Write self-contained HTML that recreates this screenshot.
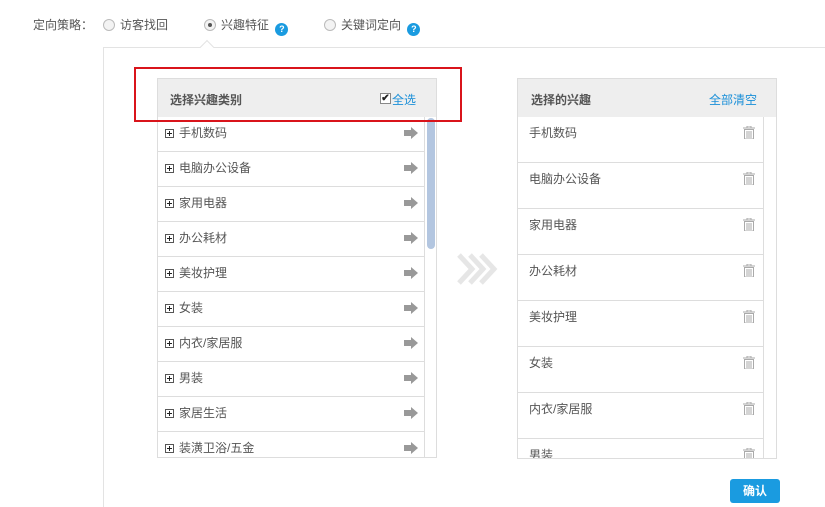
<!DOCTYPE html>
<html style="width:825px;height:507px;overflow:hidden"><head><meta charset="utf-8"><style>
*{margin:0;padding:0;box-sizing:border-box}
html,body{width:825px;height:507px;overflow:hidden}
body{background:#fff;font-family:"Liberation Sans","Noto Sans CJK SC",sans-serif;font-size:12px;color:#555;position:relative}
.abs{position:absolute}
.radio{display:inline-block;width:12px;height:12px;border:1px solid #bbb;border-radius:50%;background:#f3f3f3;vertical-align:-2px;margin-right:5px;position:relative}
.radio.on::after{content:"";position:absolute;left:3px;top:3px;width:4px;height:4px;border-radius:50%;background:#555}
.q{display:inline-block;width:13px;height:13px;border-radius:50%;background:#1a9be0;color:#fff;font-size:9px;text-align:center;line-height:13px;font-weight:bold;vertical-align:-3px;margin-left:3px}
.row{position:absolute;left:0;width:266px;height:35px;border-bottom:1px solid #ddd;line-height:32px;padding-left:7px;color:#555}
.plus{position:absolute;left:7px;top:12px;width:9px;height:9px;border:1px solid #555}
.plus::before{content:"";position:absolute;left:1px;top:3px;width:5px;height:1px;background:#222}
.plus::after{content:"";position:absolute;left:3px;top:1px;width:1px;height:5px;background:#222}
.row span.t{position:absolute;left:21px}
.arr{position:absolute;right:6px;top:10px}
.rrow{position:absolute;left:0;width:245px;height:46px;border-bottom:1px solid #ddd;padding:7px 0 0 11px;color:#555}
.trash{position:absolute;right:8px;top:9px}
</style></head><body>
<div class="abs" style="left:33px;top:16px">定向策略：</div>
<div class="abs" style="left:103px;top:16px"><span class="radio"></span>访客找回</div>
<div class="abs" style="left:204px;top:16px"><span class="radio on"></span>兴趣特征 <span class="q">?</span></div>
<div class="abs" style="left:324px;top:16px"><span class="radio"></span>关键词定向 <span class="q">?</span></div>

<div class="abs" style="left:103px;top:47px;width:730px;height:480px;border:1px solid #e3e3e3"></div>
<div class="abs" style="left:202px;top:42px;width:10px;height:10px;background:#fff;border-left:1px solid #e3e3e3;border-top:1px solid #e3e3e3;transform:rotate(45deg)"></div>

<!-- left panel -->
<div class="abs" style="left:157px;top:78px;width:280px;height:380px;border:1px solid #ddd;overflow:hidden">
  <div class="abs" style="left:0;top:0;width:280px;height:38px;background:#eee;padding:12px 0 0 12px;font-weight:bold;color:#555">选择兴趣类别
    <span class="abs" style="left:222px;top:14px;width:11px;height:11px;border:1px solid #888;background:#fff;font-size:10px;line-height:9px;text-align:center;color:#222">✔</span>
    <span class="abs" style="left:234px;top:12px;color:#1a8fd8;font-weight:normal">全选</span>
  </div>
  <div class="abs" style="left:0;top:38px;width:267px;height:342px;border-right:1px solid #ddd">
    <div class="row" style="top:0"><i class="plus"></i><span class="t">手机数码</span><svg class="arr" width="14" height="12"><path d="M0 3h7V0l7 6-7 6V9H0z" fill="#999"/></svg></div>
    <div class="row" style="top:35px"><i class="plus"></i><span class="t">电脑办公设备</span><svg class="arr" width="14" height="12"><path d="M0 3h7V0l7 6-7 6V9H0z" fill="#999"/></svg></div>
    <div class="row" style="top:70px"><i class="plus"></i><span class="t">家用电器</span><svg class="arr" width="14" height="12"><path d="M0 3h7V0l7 6-7 6V9H0z" fill="#999"/></svg></div>
    <div class="row" style="top:105px"><i class="plus"></i><span class="t">办公耗材</span><svg class="arr" width="14" height="12"><path d="M0 3h7V0l7 6-7 6V9H0z" fill="#999"/></svg></div>
    <div class="row" style="top:140px"><i class="plus"></i><span class="t">美妆护理</span><svg class="arr" width="14" height="12"><path d="M0 3h7V0l7 6-7 6V9H0z" fill="#999"/></svg></div>
    <div class="row" style="top:175px"><i class="plus"></i><span class="t">女装</span><svg class="arr" width="14" height="12"><path d="M0 3h7V0l7 6-7 6V9H0z" fill="#999"/></svg></div>
    <div class="row" style="top:210px"><i class="plus"></i><span class="t">内衣/家居服</span><svg class="arr" width="14" height="12"><path d="M0 3h7V0l7 6-7 6V9H0z" fill="#999"/></svg></div>
    <div class="row" style="top:245px"><i class="plus"></i><span class="t">男装</span><svg class="arr" width="14" height="12"><path d="M0 3h7V0l7 6-7 6V9H0z" fill="#999"/></svg></div>
    <div class="row" style="top:280px"><i class="plus"></i><span class="t">家居生活</span><svg class="arr" width="14" height="12"><path d="M0 3h7V0l7 6-7 6V9H0z" fill="#999"/></svg></div>
    <div class="row" style="top:315px"><i class="plus"></i><span class="t">装潢卫浴/五金</span><svg class="arr" width="14" height="12"><path d="M0 3h7V0l7 6-7 6V9H0z" fill="#999"/></svg></div>
  </div>
  <div class="abs" style="left:269px;top:39px;width:8px;height:131px;background:#b3c6e0;border-radius:4px"></div>
</div>
<div class="abs" style="left:134px;top:67px;width:328px;height:55px;border:2px solid #d9141b"></div>

<svg class="abs" style="left:456px;top:253px" width="42" height="33"><g fill="none" stroke="#e6e6e6" stroke-width="5"><path d="M3 2l13 14-13 14M14 2l13 14-13 14M25 2l13 14-13 14"/></g></svg>

<!-- right panel -->
<div class="abs" style="left:517px;top:78px;width:260px;height:381px;border:1px solid #ddd;overflow:hidden">
  <div class="abs" style="left:0;top:0;width:260px;height:38px;background:#eee;padding:12px 0 0 13px;font-weight:bold;color:#555">选择的兴趣<span class="abs" style="left:191px;top:12px;color:#1a8fd8;font-weight:normal">全部清空</span></div>
  <div class="abs" style="left:0;top:38px;width:246px;height:343px;border-right:1px solid #ddd">
    <div class="rrow" style="top:0">手机数码<svg class="trash" width="12" height="13"><path d="M0 2h12M4 2V0h4v2M1.5 3.5h9V13h-9zM4 5v7M6 5v7M8 5v7" fill="none" stroke="#aaa"/></svg></div>
    <div class="rrow" style="top:46px">电脑办公设备<svg class="trash" width="12" height="13"><path d="M0 2h12M4 2V0h4v2M1.5 3.5h9V13h-9zM4 5v7M6 5v7M8 5v7" fill="none" stroke="#aaa"/></svg></div>
    <div class="rrow" style="top:92px">家用电器<svg class="trash" width="12" height="13"><path d="M0 2h12M4 2V0h4v2M1.5 3.5h9V13h-9zM4 5v7M6 5v7M8 5v7" fill="none" stroke="#aaa"/></svg></div>
    <div class="rrow" style="top:138px">办公耗材<svg class="trash" width="12" height="13"><path d="M0 2h12M4 2V0h4v2M1.5 3.5h9V13h-9zM4 5v7M6 5v7M8 5v7" fill="none" stroke="#aaa"/></svg></div>
    <div class="rrow" style="top:184px">美妆护理<svg class="trash" width="12" height="13"><path d="M0 2h12M4 2V0h4v2M1.5 3.5h9V13h-9zM4 5v7M6 5v7M8 5v7" fill="none" stroke="#aaa"/></svg></div>
    <div class="rrow" style="top:230px">女装<svg class="trash" width="12" height="13"><path d="M0 2h12M4 2V0h4v2M1.5 3.5h9V13h-9zM4 5v7M6 5v7M8 5v7" fill="none" stroke="#aaa"/></svg></div>
    <div class="rrow" style="top:276px">内衣/家居服<svg class="trash" width="12" height="13"><path d="M0 2h12M4 2V0h4v2M1.5 3.5h9V13h-9zM4 5v7M6 5v7M8 5v7" fill="none" stroke="#aaa"/></svg></div>
    <div class="rrow" style="top:322px">男装<svg class="trash" width="12" height="13"><path d="M0 2h12M4 2V0h4v2M1.5 3.5h9V13h-9zM4 5v7M6 5v7M8 5v7" fill="none" stroke="#aaa"/></svg></div>
  </div>
</div>

<div class="abs" style="left:730px;top:479px;width:50px;height:24px;background:#1a9be0;border-radius:3px;color:#fff;font-weight:bold;text-align:center;line-height:24px;font-size:12px">确认</div>
</body></html>
